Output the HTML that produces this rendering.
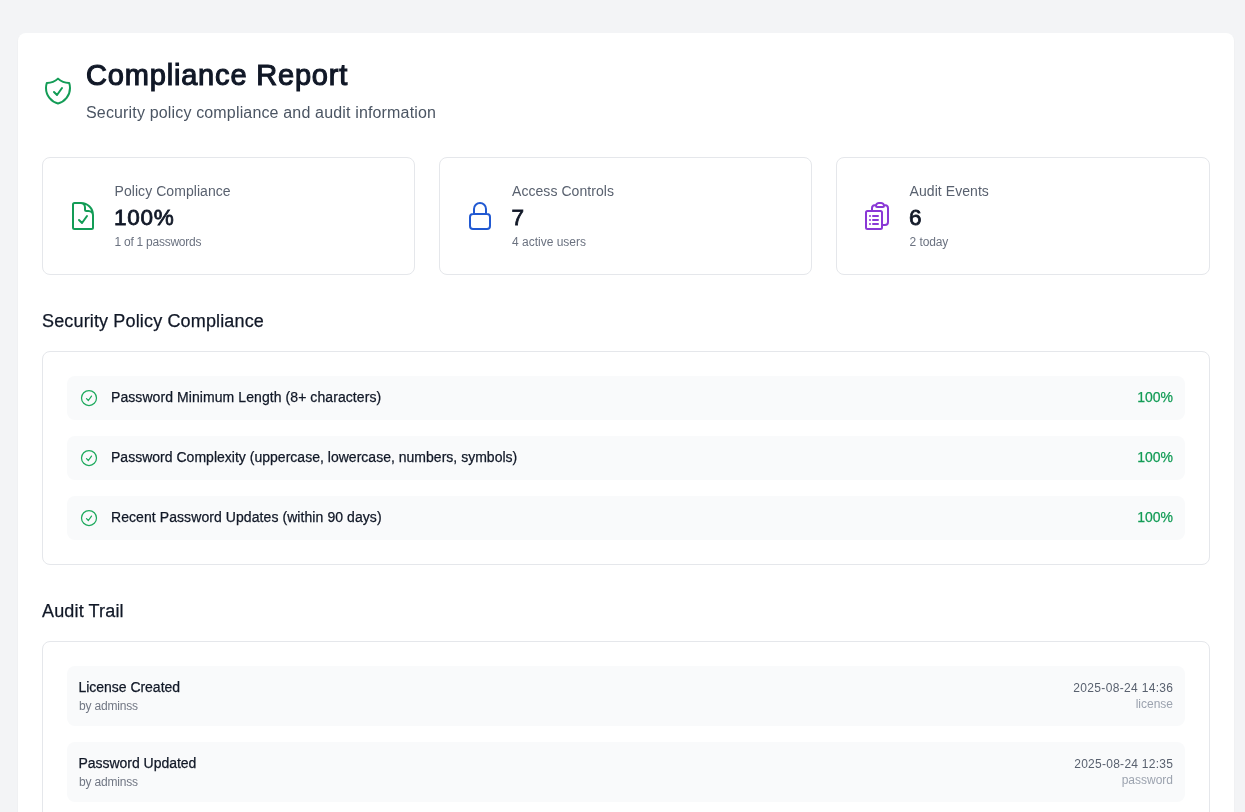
<!DOCTYPE html>
<html lang="en">
<head>
<meta charset="utf-8">
<title>Compliance Report</title>
<style>
*{box-sizing:border-box;margin:0;padding:0}
html,body{width:1245px;height:812px;overflow:hidden}
body{background:#f3f4f6;font-family:"Liberation Sans",sans-serif;color:#111827;-webkit-font-smoothing:antialiased}
.panel{will-change:transform;position:absolute;left:18px;top:33px;width:1216px;height:900px;background:#fff;border-radius:8px;box-shadow:0 1px 2px rgba(0,0,0,.05);padding:24px}
.hdr{display:flex;align-items:center;margin-bottom:32px;height:68px}
.hdr svg{width:32px;height:32px;margin-right:12px;color:#139c56;flex:none}
h1{font-size:29px;line-height:36px;font-weight:400;color:#111827;-webkit-text-stroke:1.1px #111827;letter-spacing:0.82px;margin-left:0px}
.sub{margin-top:8px;font-size:16px;line-height:24px;color:#4b5563;letter-spacing:0.16px}
.grid{display:grid;grid-template-columns:373px 373px 374px;gap:24px;margin-bottom:32px}
.card{border:1px solid #e5e7eb;border-radius:8px;padding:24px;display:flex;align-items:center;height:118px;background:#fff}
.card svg{width:32px;height:32px;flex:none}
.card .t{margin-left:16px}
.lbl{font-size:14px;line-height:20px;color:#59616f;letter-spacing:0.06px;position:relative;top:-1px}
.val{font-size:22.5px;line-height:32px;font-weight:400;color:#111827;-webkit-text-stroke:0.8px #111827;letter-spacing:0.7px;margin-left:-0.5px}
.sm{font-size:12px;line-height:16px;color:#6b7280}
h2{-webkit-text-stroke:0.25px #111827;font-size:18px;line-height:28px;font-weight:400;color:#111827;margin-bottom:16px;letter-spacing:0.15px}
.box{border:1px solid #e5e7eb;border-radius:8px;padding:24px;margin-bottom:32px}
.row{display:flex;align-items:center;justify-content:space-between;background:#f9fafb;border-radius:8px;padding:12px;margin-bottom:16px}
.row:last-child{margin-bottom:0}
.row .l{display:flex;align-items:center}
.row svg{width:20px;height:20px;color:#1da95c;flex:none}
.row .n{-webkit-text-stroke:0.25px #111827;margin-left:12px;font-size:14px;line-height:20px;color:#111827;position:relative;top:-1px;letter-spacing:0.075px}
.row .p{-webkit-text-stroke:0.25px #139c56;font-size:14px;line-height:20px;color:#139c56;position:relative;top:-1px}
.a1{-webkit-text-stroke:0.25px #111827;font-size:14px;line-height:20px;color:#111827;position:relative;top:-1px;left:-0.5px;letter-spacing:-0.03px}
.a2{font-size:12px;line-height:16px;color:#717784;letter-spacing:-0.19px}
.r{text-align:right}
.r1{font-size:12px;line-height:16px;color:#59616f;letter-spacing:0.33px;margin-right:-0.33px}
.r2{font-size:12px;line-height:16px;color:#9ca3af}
</style>
</head>
<body>
<div class="panel">
  <div class="hdr">
    <svg viewBox="0 0 24 24" fill="none" stroke="currentColor" stroke-width="1.5" stroke-linecap="round" stroke-linejoin="round"><path d="M9 12.75 11.25 15 15 9.75m-3-7.036A11.959 11.959 0 0 1 3.598 6 11.99 11.99 0 0 0 3 9.749c0 5.592 3.824 10.29 9 11.623 5.176-1.332 9-6.03 9-11.622 0-1.31-.21-2.571-.598-3.751h-.152c-3.196 0-6.1-1.248-8.25-3.285Z"/></svg>
    <div>
      <h1>Compliance Report</h1>
      <p class="sub">Security policy compliance and audit information</p>
    </div>
  </div>

  <div class="grid">
    <div class="card">
      <svg style="color:#139c56" viewBox="0 0 24 24" fill="none" stroke="currentColor" stroke-width="1.5" stroke-linecap="round" stroke-linejoin="round"><path d="M10.125 2.25h-4.5c-.621 0-1.125.504-1.125 1.125v17.25c0 .621.504 1.125 1.125 1.125h12.75c.621 0 1.125-.504 1.125-1.125v-9M10.125 2.25h.375a9 9 0 0 1 9 9v.375M10.125 2.25A3.375 3.375 0 0 1 13.5 5.625v1.5c0 .621.504 1.125 1.125 1.125h1.5a3.375 3.375 0 0 1 3.375 3.375M9 15l2.25 2.25L15 12"/></svg>
      <div class="t" style="margin-left:15.5px"><p class="lbl">Policy Compliance</p><p class="val">100%</p><p class="sm" style="letter-spacing:-0.25px">1 of 1 passwords</p></div>
    </div>
    <div class="card">
      <svg style="color:#2159d2" viewBox="0 0 24 24" fill="none" stroke="currentColor" stroke-width="1.5" stroke-linecap="round" stroke-linejoin="round"><path d="M16.5 10.5V6.75a4.5 4.5 0 1 0-9 0v3.750m-.75 11.25h10.5a2.25 2.25 0 0 0 2.25-2.25v-6.750a2.25 2.25 0 0 0-2.25-2.25H6.750a2.25 2.25 0 0 0-2.25 2.25v6.750a2.25 2.25 0 0 0 2.25 2.25Z"/></svg>
      <div class="t"><p class="lbl">Access Controls</p><p class="val">7</p><p class="sm">4 active users</p></div>
    </div>
    <div class="card">
      <svg style="color:#8a38d6" viewBox="0 0 24 24" fill="none" stroke="currentColor" stroke-width="1.5" stroke-linecap="round" stroke-linejoin="round"><path d="M9 12h3.75M9 15h3.75M9 18h3.75m3 .75H18a2.25 2.25 0 0 0 2.25-2.25V6.108c0-1.135-.845-2.098-1.976-2.192a48.424 48.424 0 0 0-1.123-.08m-5.801 0c-.065.21-.1.433-.1.664 0 .414.336.75.75.75h4.5a.75.75 0 0 0 .75-.75 2.25 2.25 0 0 0-.1-.664m-5.8 0A2.251 2.251 0 0 1 13.5 2.25H15c1.012 0 1.867.668 2.15 1.586m-5.8 0c-.376.023-.75.05-1.124.08C9.095 4.01 8.25 4.973 8.25 6.108V8.25m0 0H4.875c-.621 0-1.125.504-1.125 1.125v11.25c0 .621.504 1.125 1.125 1.125h9.75c.621 0 1.125-.504 1.125-1.125V9.375c0-.621-.504-1.125-1.125-1.125H8.25ZM6.75 12h.008v.008H6.750V12Zm0 3h.008v.008H6.750V15Zm0 3h.008v.008H6.750V18Z"/></svg>
      <div class="t" style="margin-left:16.6px"><p class="lbl">Audit Events</p><p class="val">6</p><p class="sm" style="letter-spacing:-0.1px">2 today</p></div>
    </div>
  </div>

  <h2>Security Policy Compliance</h2>
  <div class="box">
    <div class="row"><div class="l"><svg viewBox="0 0 24 24" fill="none" stroke="currentColor" stroke-width="1.5" stroke-linecap="round" stroke-linejoin="round"><path d="M9 12.75 11.25 15 15 9.75M21 12a9 9 0 1 1-18 0 9 9 0 0 1 18 0Z"/></svg><span class="n">Password Minimum Length (8+ characters)</span></div><span class="p">100%</span></div>
    <div class="row"><div class="l"><svg viewBox="0 0 24 24" fill="none" stroke="currentColor" stroke-width="1.5" stroke-linecap="round" stroke-linejoin="round"><path d="M9 12.75 11.25 15 15 9.75M21 12a9 9 0 1 1-18 0 9 9 0 0 1 18 0Z"/></svg><span class="n" style="letter-spacing:0.015px">Password Complexity (uppercase, lowercase, numbers, symbols)</span></div><span class="p">100%</span></div>
    <div class="row"><div class="l"><svg viewBox="0 0 24 24" fill="none" stroke="currentColor" stroke-width="1.5" stroke-linecap="round" stroke-linejoin="round"><path d="M9 12.75 11.25 15 15 9.75M21 12a9 9 0 1 1-18 0 9 9 0 0 1 18 0Z"/></svg><span class="n">Recent Password Updates (within 90 days)</span></div><span class="p">100%</span></div>
  </div>

  <h2>Audit Trail</h2>
  <div class="box">
    <div class="row"><div><p class="a1">License Created</p><p class="a2">by adminss</p></div><div class="r"><p class="r1">2025-08-24 14:36</p><p class="r2">license</p></div></div>
    <div class="row"><div><p class="a1">Password Updated</p><p class="a2">by adminss</p></div><div class="r"><p class="r1" style="letter-spacing:0.27px;margin-right:-0.27px">2025-08-24 12:35</p><p class="r2">password</p></div></div>
    <div class="row"><div><p class="a1">Password Created</p><p class="a2">by adminss</p></div><div class="r"><p class="r1">2025-08-24 12:30</p><p class="r2">password</p></div></div>
  </div>
</div>
</body>
</html>
